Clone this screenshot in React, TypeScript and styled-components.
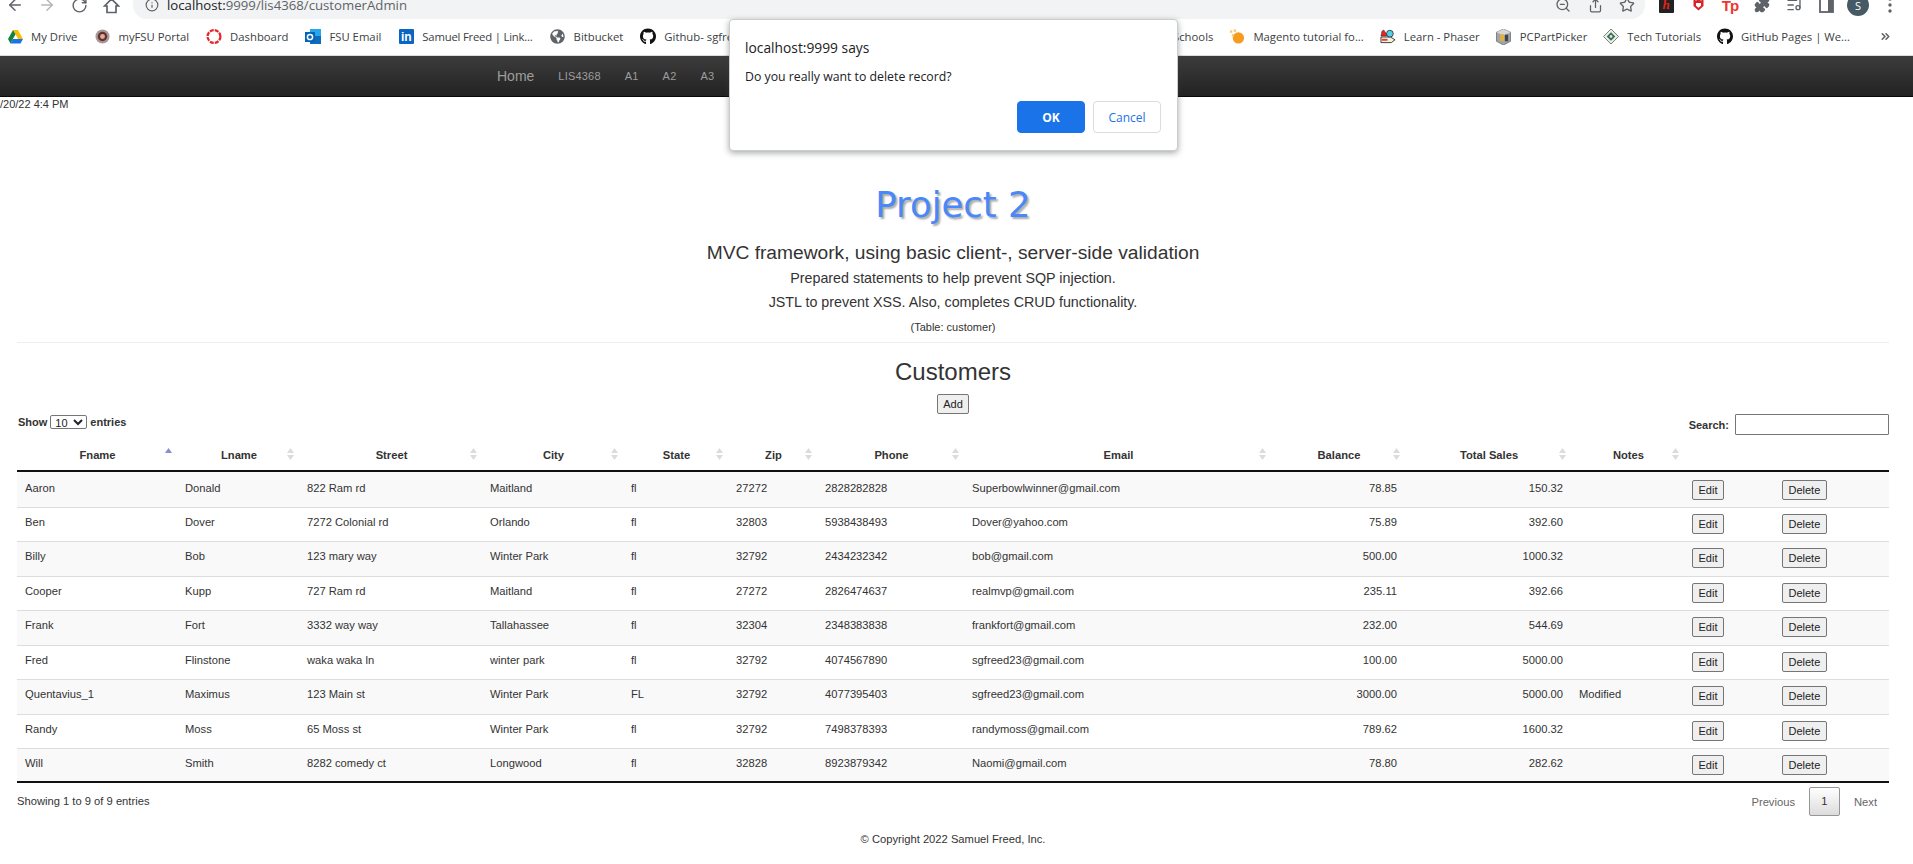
import React from 'react';
import styled, { createGlobalStyle } from 'styled-components';
import {
  ArrowLeft,
  ArrowRight,
  RotateCw,
  Info,
  ZoomOut,
  Share,
  Star,
  Puzzle,
  ListMusic,
  ChevronsRight,
} from 'lucide-react';
import { FaGithub, FaGlobeAmericas } from 'react-icons/fa';

const customers = [
  ['Aaron', 'Donald', '822 Ram rd', 'Maitland', 'fl', '27272', '2828282828', 'Superbowlwinner@gmail.com', '78.85', '150.32', ''],
  ['Ben', 'Dover', '7272 Colonial rd', 'Orlando', 'fl', '32803', '5938438493', 'Dover@yahoo.com', '75.89', '392.60', ''],
  ['Billy', 'Bob', '123 mary way', 'Winter Park', 'fl', '32792', '2434232342', 'bob@gmail.com', '500.00', '1000.32', ''],
  ['Cooper', 'Kupp', '727 Ram rd', 'Maitland', 'fl', '27272', '2826474637', 'realmvp@gmail.com', '235.11', '392.66', ''],
  ['Frank', 'Fort', '3332 way way', 'Tallahassee', 'fl', '32304', '2348383838', 'frankfort@gmail.com', '232.00', '544.69', ''],
  ['Fred', 'Flinstone', 'waka waka ln', 'winter park', 'fl', '32792', '4074567890', 'sgfreed23@gmail.com', '100.00', '5000.00', ''],
  ['Quentavius_1', 'Maximus', '123 Main st', 'Winter Park', 'FL', '32792', '4077395403', 'sgfreed23@gmail.com', '3000.00', '5000.00', 'Modified'],
  ['Randy', 'Moss', '65 Moss st', 'Winter Park', 'fl', '32792', '7498378393', 'randymoss@gmail.com', '789.62', '1600.32', ''],
  ['Will', 'Smith', '8282 comedy ct', 'Longwood', 'fl', '32828', '8923879342', 'Naomi@gmail.com', '78.80', '282.62', ''],
];

const columns = [
  { label: 'Fname', width: 161 },
  { label: 'Lname', width: 122 },
  { label: 'Street', width: 183 },
  { label: 'City', width: 141 },
  { label: 'State', width: 105 },
  { label: 'Zip', width: 89 },
  { label: 'Phone', width: 147 },
  { label: 'Email', width: 307 },
  { label: 'Balance', width: 134 },
  { label: 'Total Sales', width: 166 },
  { label: 'Notes', width: 113 },
  { label: '', width: 90 },
  { label: '', width: 114 },
];

const GlobalStyle = createGlobalStyle`
  html, body {
    margin: 0;
    padding: 0;
    height: 864px;
    overflow: hidden;
    background: #fff;
  }
  * {
    box-sizing: border-box;
  }
`;

const Page = styled.div`
  position: relative;
  width: 1913px;
  height: 864px;
  overflow: hidden;
  font-family: 'Liberation Sans', Arial, sans-serif;
  color: #333;
`;

const Toolbar = styled.div`
  display: flex;
  align-items: flex-end;
  height: 19px;
  overflow: hidden;
  color: #5f6368;
`;

const NavIcons = styled.div`
  display: flex;
  align-items: center;
  gap: 14px;
  width: 133px;
  height: 28px;
  padding-left: 6px;
  flex: none;
`;

const IconSlot = styled.span<{ $dim?: boolean }>`
  display: flex;
  align-items: center;
  justify-content: center;
  width: 18px;
  height: 18px;
  color: ${(p) => (p.$dim ? '#b4b6b9' : '#5f6368')};
`;

const UrlPill = styled.div`
  display: flex;
  align-items: center;
  width: 1512px;
  height: 28px;
  padding: 0 9px 0 12px;
  flex: none;
  background: #f1f3f4;
  border-radius: 0 0 14px 14px;
`;

const UrlText = styled.div`
  margin-left: 8px;
  font-family: 'Open Sans', sans-serif;
  font-size: 13.2px;
  color: #5f6368;
  flex: 1;
  & b {
    font-weight: 400;
    color: #202124;
  }
`;

const PillActions = styled.div`
  display: flex;
  gap: 14px;
`;

const Extensions = styled.div`
  display: flex;
  align-items: center;
  height: 28px;
  padding-left: 5px;
`;

const ExtSlot = styled.span`
  display: flex;
  align-items: center;
  justify-content: center;
  width: 32px;
  height: 28px;
  flex: none;
  color: #5f6368;
`;

const ExtH = styled.span`
  display: flex;
  align-items: center;
  justify-content: center;
  width: 15px;
  height: 15px;
  background: #222;
  border-radius: 1px;
  color: #e2231a;
  font: italic 700 13px 'Liberation Serif', serif;
`;

const ExtTp = styled.span`
  color: #f0342f;
  font: 700 15px 'Liberation Sans', sans-serif;
  letter-spacing: -1px;
`;

const Avatar = styled.span`
  display: flex;
  align-items: center;
  justify-content: center;
  width: 22px;
  height: 22px;
  border-radius: 50%;
  background: #455a64;
  color: #fff;
  font: 11px 'Open Sans', sans-serif;
`;

const BookmarkBar = styled.div`
  display: flex;
  align-items: center;
  justify-content: space-between;
  height: 37px;
  padding: 0 19px 1px 7px;
  border-bottom: 1px solid #dadce0;
`;

const BookmarkGroup = styled.div<{ $gap: number }>`
  display: flex;
  align-items: center;
  gap: ${(p) => p.$gap}px;
`;

const Bookmark = styled.div`
  display: flex;
  align-items: center;
  gap: 8px;
  font-family: 'Open Sans', sans-serif;
  font-size: 11.3px;
  color: #3c4043;
  white-space: nowrap;
`;

const TightLabel = styled.span`
  letter-spacing: -0.2px;
`;

const Favicon = styled.span`
  display: flex;
  align-items: center;
  justify-content: center;
  width: 16px;
  height: 16px;
  flex: none;
`;

const LinkedInMark = styled.span`
  display: flex;
  align-items: flex-end;
  justify-content: center;
  width: 15px;
  height: 15px;
  background: #0a66c2;
  border-radius: 1px;
  color: #fff;
  font: 700 12px/14px 'Liberation Sans', sans-serif;
`;

const OverflowButton = styled(IconSlot)`
  margin-left: 10px;
`;

const Navbar = styled.nav`
  display: flex;
  align-items: center;
  gap: 24px;
  height: 41px;
  padding-left: 497px;
  background: linear-gradient(#3c3c3c, #222);
  border-bottom: 1px solid #080808;
`;

const Brand = styled.a`
  font-size: 14px;
  color: #9d9d9d;
`;

const NavLink = styled.a`
  font-size: 11px;
  letter-spacing: 0.2px;
  color: #9d9d9d;
`;

const DateLine = styled.div`
  height: 15px;
  font-size: 11px;
  line-height: 15px;
  color: #333;
`;

const Content = styled.main`
  padding: 0 24px 0 17px;
  text-align: center;
`;

const Title = styled.h1`
  margin: 70px 0 0;
  font-family: 'DejaVu Sans', sans-serif;
  font-size: 35.5px;
  font-weight: 400;
  line-height: 46px;
  color: #4a88fa;
  text-shadow: 2px 2px 2px #a9a9a9;
`;

const Subtitle = styled.h2`
  margin: 12px 0 0;
  font-size: 19.2px;
  font-weight: 400;
  line-height: 25px;
  color: #333;
`;

const Lead = styled.p<{ $gap: number }>`
  margin: ${(p) => p.$gap}px 0 0;
  font-size: 14.3px;
  line-height: 20px;
  color: #333;
`;

const TableNote = styled.p`
  margin: 7px 0 0;
  font-size: 11px;
  line-height: 16px;
`;

const Rule = styled.hr`
  height: 1px;
  margin: 7px 0 0;
  border: 0;
  background: #eee;
`;

const SectionTitle = styled.h3`
  margin: 14px 0 0;
  font-size: 24px;
  font-weight: 400;
  line-height: 30px;
  color: #333;
`;

const Button = styled.button`
  height: 20px;
  padding: 0 5.5px;
  background: #efefef;
  border: 1px solid #767676;
  border-radius: 2px;
  font-family: 'Liberation Sans', Arial, sans-serif;
  font-size: 11px;
  color: #222;
`;

const RowButton = styled(Button)`
  display: block;
`;

const AddRow = styled.div`
  height: 20px;
  margin-top: 7px;
`;

const TableControls = styled.div`
  display: flex;
  align-items: flex-start;
  justify-content: space-between;
  height: 27px;
  font-size: 11px;
  font-weight: 700;
  color: #333;
`;

const Length = styled.label`
  display: flex;
  align-items: center;
  gap: 3px;
  height: 15px;
  padding-left: 1px;
`;

const LengthSelect = styled.select`
  width: 37px;
  height: 14px;
  padding: 0;
  font-family: 'Liberation Sans', Arial, sans-serif;
  font-size: 11px;
  background: #fff;
  border: 1px solid #767676;
  border-radius: 2px;
  color: #222;
`;

const SearchBox = styled.label`
  display: flex;
  align-items: center;
  gap: 6px;
`;

const SearchInput = styled.input`
  width: 154px;
  height: 21px;
  padding: 0 2px;
  background: #fff;
  border: 1px solid #767676;
  border-radius: 1px;
`;

const DataTable = styled.table`
  width: 1872px;
  table-layout: fixed;
  border-collapse: separate;
  border-spacing: 0;
  font-size: 11.2px;
  color: #333;
`;

const HeadCell = styled.th`
  position: relative;
  height: 31px;
  padding: 6px 7px 7px;
  border-bottom: 2px solid #111;
  font-weight: 700;
  line-height: 16px;
  vertical-align: top;
`;

const SortMark = styled.svg`
  position: absolute;
  top: 7px;
  right: 6px;
`;

const Row = styled.tr<{ $striped: boolean }>`
  background: ${(p) => (p.$striped ? '#f9f9f9' : '#fff')};
  & td {
    height: ${(p) => (p.$striped ? 35 : 34)}px;
  }
  &:first-child td {
    padding-top: 8px;
    border-top: 0;
  }
  &:last-child td {
    border-bottom: 2px solid #111;
  }
`;

const Cell = styled.td<{ $right?: boolean }>`
  padding: 6px ${(p) => (p.$right ? 9 : 7)}px 0 7px;
  border-top: 1px solid #ddd;
  line-height: 16px;
  text-align: ${(p) => (p.$right ? 'right' : 'left')};
  vertical-align: top;
  white-space: nowrap;
  &:first-child {
    padding-left: 8px;
  }
`;

const TableFooter = styled.div`
  display: flex;
  justify-content: space-between;
  padding-top: 4px;
  font-size: 11.2px;
  text-align: left;
`;

const EntryCount = styled.div`
  margin-top: 6px;
  line-height: 16px;
`;

const Pager = styled.div`
  display: flex;
  align-items: center;
  height: 29px;
  margin-right: -2px;
  color: #666;
`;

const PagerLink = styled.a`
  padding: 0 14px;
`;

const PagerCurrent = styled.a`
  width: 31px;
  height: 29px;
  line-height: 27px;
  text-align: center;
  color: #333;
  border: 1px solid #979797;
  border-radius: 2px;
  background: linear-gradient(#fff, #dcdcdc);
`;

const Copyright = styled.footer`
  margin-top: 15px;
  font-size: 11.2px;
  line-height: 16px;
`;

const Dialog = styled.div`
  position: absolute;
  top: 19px;
  left: 729px;
  width: 449px;
  height: 132px;
  padding: 19px 16px 0 15px;
  background: #fff;
  border: 1px solid #ccc;
  border-radius: 4px;
  box-shadow: 0 2px 6px rgba(60, 64, 67, 0.45);
  font-family: 'Open Sans', sans-serif;
  color: #202124;
`;

const DialogTitle = styled.div`
  font-size: 13.8px;
  line-height: 18px;
`;

const DialogMessage = styled.div`
  margin-top: 11px;
  font-size: 12.3px;
  line-height: 18px;
`;

const DialogActions = styled.div`
  display: flex;
  justify-content: flex-end;
  gap: 8px;
  margin-top: 15px;
`;

const DialogButton = styled.button<{ $primary?: boolean }>`
  width: 68px;
  height: 32px;
  padding: 0;
  border-radius: 4px;
  border: 1px solid ${(p) => (p.$primary ? '#1a73e8' : '#dadce0')};
  background: ${(p) => (p.$primary ? '#1a73e8' : '#fff')};
  color: ${(p) => (p.$primary ? '#fff' : '#1a73e8')};
  font-family: 'Open Sans', sans-serif;
  font-size: 12px;
  font-weight: ${(p) => (p.$primary ? 700 : 400)};
`;

function SortIcon({ active }: { active: boolean }) {
  return (
    <SortMark width="7" height="12" viewBox="0 0 7 12">
      <path d="M3.5 0 L7 5 L0 5 Z" fill={active ? '#8a8ad8' : '#dcdcdc'} />
      {!active && <path d="M3.5 12 L7 7 L0 7 Z" fill="#dcdcdc" />}
    </SortMark>
  );
}

function HouseIcon() {
  return (
    <svg width="17" height="17" viewBox="0 0 17 17" fill="none" stroke="#5f6368" strokeWidth="1.7">
      <path d="M1.5 9 L8.5 2 L15.5 9 H13 V15.5 H4 V9 Z" strokeLinejoin="miter" />
    </svg>
  );
}

function PanelIcon() {
  return (
    <svg width="15" height="16" viewBox="0 0 15 16">
      <rect x="1" y="1" width="13" height="14" fill="none" stroke="#5f6368" strokeWidth="1.8" />
      <rect x="9" y="1" width="5" height="14" fill="#5f6368" />
    </svg>
  );
}

function DotsIcon() {
  return (
    <svg width="6" height="18" viewBox="0 0 6 18" fill="#5f6368">
      <circle cx="3" cy="3" r="1.7" />
      <circle cx="3" cy="9" r="1.7" />
      <circle cx="3" cy="15" r="1.7" />
    </svg>
  );
}

function DriveIcon() {
  return (
    <svg width="15" height="14" viewBox="0 0 16 15">
      <path d="M5.4 0 H10.6 L16 9.6 H10.8 Z" fill="#fbbc04" />
      <path d="M5.4 0 L0 9.6 L2.6 14.4 L8 4.6 Z" fill="#188038" />
      <path d="M5.2 9.6 H16 L13.4 14.4 H2.6 Z" fill="#1a73e8" />
    </svg>
  );
}

function SealIcon() {
  return (
    <svg width="15" height="15" viewBox="0 0 16 16">
      <circle cx="8" cy="8" r="7.5" fill="#a49a96" />
      <circle cx="8" cy="8" r="5" fill="#6e2a35" />
      <circle cx="8" cy="8" r="2.6" fill="#c9b98f" />
    </svg>
  );
}

function RingIcon() {
  return (
    <svg width="17" height="17" viewBox="0 0 17 17">
      <circle cx="8.5" cy="8.5" r="6.8" fill="none" stroke="#e5252a" strokeWidth="2.4" strokeDasharray="4.2 1.14" />
    </svg>
  );
}

function OutlookIcon() {
  return (
    <svg width="16" height="16" viewBox="0 0 16 16">
      <rect x="5" y="0" width="11" height="15" fill="#28a8ea" />
      <rect x="5" y="7" width="11" height="8" fill="#0f6cbd" />
      <rect x="0" y="3" width="10" height="10" fill="#0364b8" />
      <circle cx="5" cy="8" r="2.6" fill="none" stroke="#fff" strokeWidth="1.5" />
    </svg>
  );
}

function SparkIcon() {
  return (
    <svg width="17" height="16" viewBox="0 0 17 16">
      <circle cx="10" cy="9" r="6" fill="#f79a1e" />
      <rect x="1" y="1" width="2.5" height="2.5" fill="#f9c56e" />
      <rect x="5" y="0" width="2.5" height="2.5" fill="#f9c56e" />
      <rect x="3" y="5" width="2.5" height="2.5" fill="#f9c56e" />
    </svg>
  );
}

function PhaserIcon() {
  return (
    <svg width="17" height="15" viewBox="0 0 17 15">
      <path d="M1 8 H11 L16 11 L12 14 H1 Z" fill="#f6f0dc" stroke="#222" strokeWidth="0.9" />
      <path d="M1 7 L2 2 L4 0.5 L7 5 L7 7 Z" fill="#e22" stroke="#222" strokeWidth="0.5" />
      <circle cx="10.5" cy="4.5" r="3.6" fill="#53cfe6" stroke="#222" strokeWidth="0.8" />
      <rect x="2" y="10" width="6" height="2" fill="#d8452a" />
    </svg>
  );
}

function CaseIcon() {
  return (
    <svg width="15" height="16" viewBox="0 0 15 17">
      <path d="M7.5 0 L15 3.5 V13 L7.5 17 L0 13 V3.5 Z" fill="#a2a6a9" stroke="#555" strokeWidth="0.7" />
      <path d="M7.5 0 L15 3.5 L7.5 7 L0 3.5 Z" fill="#d4d6d8" />
      <rect x="4" y="5.5" width="4" height="7" fill="#e2b23c" />
      <rect x="9" y="6" width="3.5" height="7" fill="#444" />
    </svg>
  );
}

function DiamondIcon() {
  return (
    <svg width="17" height="17" viewBox="0 0 17 17">
      <path d="M8.5 0.5 L16.5 8.5 L8.5 16.5 L0.5 8.5 Z" fill="#e8efe8" stroke="#6b7a70" />
      <path d="M8.5 4 L13 8.5 L8.5 13 L4 8.5 Z" fill="#3c6e57" />
      <circle cx="8.5" cy="8.5" r="1.5" fill="#d5e4da" />
    </svg>
  );
}

function ShieldIcon() {
  return (
    <svg width="11" height="12" viewBox="0 0 11 12">
      <path d="M0.5 0.5 L3 1.5 L5.5 0.5 L8 1.5 L10.5 0.5 V7 L5.5 11.5 L0.5 7 Z" fill="#d8232a" />
      <path d="M3 4 H8 V6.8 L5.5 8.8 L3 6.8 Z" fill="#fff" />
    </svg>
  );
}

const leftBookmarks: [React.ReactNode, React.ReactNode][] = [
  [<DriveIcon />, 'My Drive'],
  [<SealIcon />, 'myFSU Portal'],
  [<RingIcon />, 'Dashboard'],
  [<OutlookIcon />, 'FSU Email'],
  [<LinkedInMark>in</LinkedInMark>, <TightLabel>Samuel Freed | Link...</TightLabel>],
  [<FaGlobeAmericas size={15} color="#5f6368" />, 'Bitbucket'],
  [<FaGithub size={17} color="#111" />, 'Github- sgfreed23'],
];

const rightBookmarks: [React.ReactNode, React.ReactNode][] = [
  [<SealIcon />, 'W3Schools'],
  [<SparkIcon />, 'Magento tutorial fo...'],
  [<PhaserIcon />, 'Learn - Phaser'],
  [<CaseIcon />, 'PCPartPicker'],
  [<DiamondIcon />, 'Tech Tutorials'],
  [<FaGithub size={17} color="#111" />, 'GitHub Pages | We...'],
];

export default function App() {
  return (
    <Page>
      <GlobalStyle />
      <Toolbar>
        <NavIcons>
          <IconSlot><ArrowLeft size={20} /></IconSlot>
          <IconSlot $dim><ArrowRight size={20} /></IconSlot>
          <IconSlot><RotateCw size={17} /></IconSlot>
          <IconSlot><HouseIcon /></IconSlot>
        </NavIcons>
        <UrlPill>
          <Info size={14} />
          <UrlText><b>localhost:</b>9999/lis4368/customerAdmin</UrlText>
          <PillActions>
            <IconSlot><ZoomOut size={16} /></IconSlot>
            <IconSlot><Share size={15} /></IconSlot>
            <IconSlot><Star size={16} /></IconSlot>
          </PillActions>
        </UrlPill>
        <Extensions>
          <ExtSlot><ExtH>h</ExtH></ExtSlot>
          <ExtSlot><ShieldIcon /></ExtSlot>
          <ExtSlot><ExtTp>Tp</ExtTp></ExtSlot>
          <ExtSlot><Puzzle size={16} fill="#5f6368" /></ExtSlot>
          <ExtSlot><ListMusic size={16} /></ExtSlot>
          <ExtSlot><PanelIcon /></ExtSlot>
          <ExtSlot><Avatar>S</Avatar></ExtSlot>
          <ExtSlot><DotsIcon /></ExtSlot>
        </Extensions>
      </Toolbar>

      <BookmarkBar>
        <BookmarkGroup $gap={17}>
          {leftBookmarks.map(([icon, label], i) => (
            <Bookmark key={i}><Favicon>{icon}</Favicon>{label}</Bookmark>
          ))}
        </BookmarkGroup>
        <BookmarkGroup $gap={16}>
          {rightBookmarks.map(([icon, label], i) => (
            <Bookmark key={i}><Favicon>{icon}</Favicon>{label}</Bookmark>
          ))}
          <OverflowButton><ChevronsRight size={13} strokeWidth={3} /></OverflowButton>
        </BookmarkGroup>
      </BookmarkBar>

      <Navbar>
        <Brand>Home</Brand>
        <NavLink>LIS4368</NavLink>
        <NavLink>A1</NavLink>
        <NavLink>A2</NavLink>
        <NavLink>A3</NavLink>
        <NavLink>A4</NavLink>
        <NavLink>A5</NavLink>
        <NavLink>P1</NavLink>
        <NavLink>P2</NavLink>
      </Navbar>

      <DateLine>/20/22 4:4 PM</DateLine>

      <Content>
        <Title>Project 2</Title>
        <Subtitle>MVC framework, using basic client-, server-side validation</Subtitle>
        <Lead $gap={3}>Prepared statements to help prevent SQP injection.</Lead>
        <Lead $gap={4}>JSTL to prevent XSS. Also, completes CRUD functionality.</Lead>
        <TableNote>(Table: customer)</TableNote>
        <Rule />
        <SectionTitle>Customers</SectionTitle>
        <AddRow><Button>Add</Button></AddRow>

        <TableControls>
          <Length>
            Show
            <LengthSelect defaultValue="10">
              <option value="10">10</option>
              <option value="25">25</option>
            </LengthSelect>
            entries
          </Length>
          <SearchBox>
            Search:
            <SearchInput type="search" />
          </SearchBox>
        </TableControls>

        <DataTable>
          <colgroup>
            {columns.map((c, i) => <col key={i} width={c.width} />)}
          </colgroup>
          <thead>
            <tr>
              {columns.map((c, i) => (
                <HeadCell key={i}>
                  {c.label}
                  {c.label && <SortIcon active={i === 0} />}
                </HeadCell>
              ))}
            </tr>
          </thead>
          <tbody>
            {customers.map((row, r) => (
              <Row key={row[0]} $striped={r % 2 === 0}>
                {row.map((value, c) => (
                  <Cell key={c} $right={c === 8 || c === 9}>{value}</Cell>
                ))}
                <Cell><RowButton>Edit</RowButton></Cell>
                <Cell><RowButton>Delete</RowButton></Cell>
              </Row>
            ))}
          </tbody>
        </DataTable>

        <TableFooter>
          <EntryCount>Showing 1 to 9 of 9 entries</EntryCount>
          <Pager>
            <PagerLink>Previous</PagerLink>
            <PagerCurrent>1</PagerCurrent>
            <PagerLink>Next</PagerLink>
          </Pager>
        </TableFooter>

        <Copyright>© Copyright 2022 Samuel Freed, Inc.</Copyright>
      </Content>

      <Dialog>
        <DialogTitle>localhost:9999 says</DialogTitle>
        <DialogMessage>Do you really want to delete record?</DialogMessage>
        <DialogActions>
          <DialogButton $primary>OK</DialogButton>
          <DialogButton>Cancel</DialogButton>
        </DialogActions>
      </Dialog>
    </Page>
  );
}
